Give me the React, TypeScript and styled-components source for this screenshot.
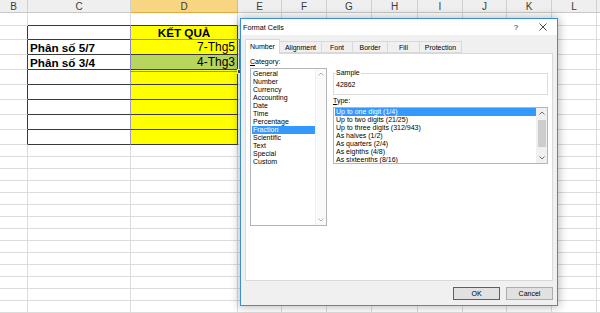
import React from "react";
import styled, { createGlobalStyle } from "styled-components";

const Global = createGlobalStyle`
  html, body { margin: 0; padding: 0; background: #ffffff; }
  body {
    width: 600px;
    height: 313px;
    overflow: hidden;
    font-family: "Liberation Sans", Arial, sans-serif;
  }
`;

const COLS = [28, 103, 107, 44, 45, 45, 46, 45, 44, 45, 45, 45];
const LETTERS = ["B", "C", "D", "E", "F", "G", "H", "I", "J", "K", "L", ""];
const ROWS = [13, 13, 14, 15, 15, 15, 15, 15, 15, 15, ...Array(14).fill(12)];

const GRID = "#dcdcdc";
const DARK = "#3a3a3a";
const INNER = "#9a9ac4";

const Page = styled.div`
  position: relative;
  width: 600px;
  height: 313px;
  overflow: hidden;
  background: #fff;
`;

const Sheet = styled.div`
  display: grid;
  grid-template-columns: ${COLS.map((c) => c + "px").join(" ")};
  grid-template-rows: ${ROWS.map((r) => r + "px").join(" ")};
  width: max-content;
`;

const HeaderCell = styled.div<{ $active?: boolean }>`
  box-sizing: border-box;
  display: flex;
  align-items: center;
  justify-content: center;
  font-size: 10px;
  color: #3c3c3c;
  background: ${(p) => (p.$active ? "#f8d582" : "#efefef")};
  border-right: 1px solid ${(p) => (p.$active ? "#e2bb5e" : "#d0d0d0")};
  border-bottom: 1px solid ${(p) => (p.$active ? "#e6a93a" : "#c8c8c8")};
`;

const Cell = styled.div<{
  $bg: string;
  $br: string;
  $bb: string;
  $align: "left" | "right" | "center";
  $bold?: boolean;
}>`
  box-sizing: border-box;
  display: flex;
  align-items: center;
  justify-content: ${(p) =>
    p.$align === "left" ? "flex-start" : p.$align === "right" ? "flex-end" : "center"};
  padding: 0 2px;
  background: ${(p) => p.$bg};
  border-right: 1px solid ${(p) => p.$br};
  border-bottom: 1px solid ${(p) => p.$bb};
  font-size: ${(p) => (p.$bold ? "11.7px" : "12px")};
  font-weight: ${(p) => (p.$bold ? 700 : 400)};
  color: #000;
  white-space: nowrap;
  overflow: hidden;
`;

const Selection = styled.div`
  position: absolute;
  left: 130px;
  top: 39px;
  width: 108px;
  height: 31px;
  border: 1px solid #8585c2;
  pointer-events: none;
`;

const FillHandle = styled.div`
  position: absolute;
  right: -3px;
  bottom: -3px;
  width: 3px;
  height: 3px;
  background: #4a4a6a;
  border: 1px solid #fff;
`;

/* ---------- dialog ---------- */

const Dialog = styled.div`
  position: absolute;
  left: 240px;
  top: 18px;
  width: 318px;
  height: 288px;
  box-sizing: border-box;
  border: 1px solid #3a8fda;
  background: #f0f0f0;
  box-shadow: 0 0 9px 1px rgba(0, 0, 0, 0.28);
  display: flex;
  flex-direction: column;
  font-family: "Liberation Sans", Arial, sans-serif;
  font-size: 7px;
  color: #000;
`;

const TitleBar = styled.div`
  height: 16px;
  background: #fff;
  display: flex;
  align-items: center;
  padding: 0 9px 0 2px;
  font-size: 7.2px;
`;

const Title = styled.span`
  flex: 1;
`;

const TitleButton = styled.span`
  display: flex;
  align-items: center;
  justify-content: center;
  width: 10px;
  margin-left: 17px;
  font-size: 8px;
  color: #222;
`;

const Body = styled.div`
  flex: 1;
  display: flex;
  flex-direction: column;
  padding: 4px 4px 5px 4px;
`;

const TabRow = styled.div`
  display: flex;
  align-items: flex-end;
  height: 14px;
  position: relative;
  z-index: 1;
`;

const Tab = styled.div<{ $w: number; $active?: boolean }>`
  box-sizing: border-box;
  width: ${(p) => p.$w}px;
  height: ${(p) => (p.$active ? 15 : 12)}px;
  margin-bottom: ${(p) => (p.$active ? -1 : 0)}px;
  display: flex;
  align-items: center;
  justify-content: center;
  padding-bottom: ${(p) => (p.$active ? 2 : 0)}px;
  background: ${(p) => (p.$active ? "#ffffff" : "#f0f0f0")};
  border: 1px solid #d9d9d9;
  border-bottom: ${(p) => (p.$active ? "none" : "1px solid #d9d9d9")};
  border-left: ${(p) => (p.$active ? "1px solid #d9d9d9" : "none")};
  white-space: nowrap;
`;

const Panel = styled.div`
  box-sizing: border-box;
  height: 228px;
  background: #fff;
  border: 1px solid #d9d9d9;
  display: flex;
  gap: 6px;
  padding: 4px 4px 0 4px;
`;

const LeftCol = styled.div`
  width: 77px;
  display: flex;
  flex-direction: column;
`;

const RightCol = styled.div`
  width: 215px;
  display: flex;
  flex-direction: column;
  padding-top: 15px;
`;

const FieldLabel = styled.div<{ $mt?: number }>`
  height: 8px;
  line-height: 8px;
  margin-top: ${(p) => p.$mt ?? 0}px;
  margin-bottom: 2px;
  white-space: nowrap;
`;

const ListBox = styled.div<{ $h: number }>`
  box-sizing: border-box;
  height: ${(p) => p.$h}px;
  border: 1px solid #b3b5ba;
  background: #fff;
  display: flex;
  overflow: hidden;
`;

const Items = styled.div<{ $pt: number }>`
  flex: 1;
  padding-top: ${(p) => p.$pt}px;
  min-width: 0;
`;

const Item = styled.div<{ $sel?: boolean }>`
  height: 8px;
  line-height: 8px;
  padding-left: 1px;
  margin-left: 1px;
  white-space: nowrap;
  background: ${(p) => (p.$sel ? "#3399ff" : "transparent")};
  color: ${(p) => (p.$sel ? "#fff" : "#000")};
`;

const Scroll = styled.div<{ $track: string }>`
  width: 10px;
  display: flex;
  flex-direction: column;
  align-items: stretch;
  background: ${(p) => p.$track};
  border-left: 1px solid #f0f0f0;
`;

const Arrow = styled.div`
  height: 10px;
  display: flex;
  align-items: center;
  justify-content: center;
`;

const Track = styled.div`
  flex: 1;
  display: flex;
  flex-direction: column;
  padding: 1px 1px;
`;

const Thumb = styled.div`
  margin-top: 1px;
  height: 27px;
  background: #cdcdcd;
`;

const GroupBox = styled.div`
  position: relative;
  box-sizing: border-box;
  height: 22px;
  border: 1px solid #dcdcdc;
  padding: 7px 0 0 2px;
  line-height: 8px;
`;

const Legend = styled.span`
  position: absolute;
  left: 2px;
  top: -5px;
  line-height: 8px;
  background: #fff;
  padding-right: 1px;
`;

const Footer = styled.div`
  display: flex;
  justify-content: flex-end;
  gap: 6px;
  margin-top: 6px;
`;

const Button = styled.div<{ $default?: boolean }>`
  box-sizing: border-box;
  width: 47px;
  height: 13px;
  display: flex;
  align-items: center;
  justify-content: center;
  background: #e1e1e1;
  border: 1px solid ${(p) => (p.$default ? "#0078d7" : "#adadad")};
`;

const Chevron = ({ up, color }: { up?: boolean; color: string }) => (
  <svg width="6" height="4" viewBox="0 0 6 4">
    <polyline
      points={up ? "0.5,3.5 3,1 5.5,3.5" : "0.5,0.5 3,3 5.5,0.5"}
      fill="none"
      stroke={color}
      strokeWidth="0.9"
    />
  </svg>
);

const CloseIcon = () => (
  <svg width="8" height="8" viewBox="0 0 8 8">
    <path d="M0.5 0.5 L7.5 7.5 M7.5 0.5 L0.5 7.5" stroke="#333" strokeWidth="0.9" />
  </svg>
);

const CATEGORIES = [
  "General",
  "Number",
  "Currency",
  "Accounting",
  "Date",
  "Time",
  "Percentage",
  "Fraction",
  "Scientific",
  "Text",
  "Special",
  "Custom",
];

const TYPES = [
  "Up to one digit (1/4)",
  "Up to two digits (21/25)",
  "Up to three digits (312/943)",
  "As halves (1/2)",
  "As quarters (2/4)",
  "As eighths (4/8)",
  "As sixteenths (8/16)",
];

const TABS: [string, number][] = [
  ["Number", 35],
  ["Alignment", 42],
  ["Font", 31],
  ["Border", 35],
  ["Fill", 32],
  ["Protection", 42],
];

type CellData = { text: string; align: "left" | "right" | "center"; bold?: boolean; bg: string };

const TABLE: Record<number, [CellData, CellData]> = {
  2: [{ text: "", align: "left", bg: "#fff" }, { text: "KẾT QUẢ", align: "center", bold: true, bg: "#ffff00" }],
  3: [{ text: "Phân số 5/7", align: "left", bold: true, bg: "#fff" }, { text: "7-Thg5", align: "right", bg: "#ffff00" }],
  4: [{ text: "Phân số 3/4", align: "left", bold: true, bg: "#fff" }, { text: "4-Thg3", align: "right", bg: "#b7d65b" }],
};

function renderSheet() {
  const cells: React.ReactNode[] = [];
  LETTERS.forEach((l, c) => {
    cells.push(
      <HeaderCell key={`h${c}`} $active={c === 2}>
        {l}
      </HeaderCell>
    );
  });
  for (let r = 1; r < ROWS.length; r++) {
    const inTable = r >= 2 && r <= 9;
    for (let c = 0; c < COLS.length; c++) {
      let br = GRID;
      let bb = GRID;
      let bg = "#fff";
      let text = "";
      let align: "left" | "right" | "center" = "left";
      let bold = false;
      if (inTable) {
        if (c === 0) br = DARK;
        if (c === 1) br = INNER;
        if (c === 2) br = DARK;
        if (c === 1 || c === 2) bb = DARK;
        if (c === 2) bg = "#ffff00";
        const row = TABLE[r];
        if (row && (c === 1 || c === 2)) {
          const d = row[c - 1];
          text = d.text;
          align = d.align;
          bold = !!d.bold;
          bg = d.bg;
        }
      }
      if (r === 1 && (c === 1 || c === 2)) bb = DARK;
      cells.push(
        <Cell key={`${r}-${c}`} $bg={bg} $br={br} $bb={bb} $align={align} $bold={bold}>
          {text}
        </Cell>
      );
    }
  }
  return cells;
}

export default function App() {
  return (
    <>
      <Global />
      <Page>
        <Sheet>{renderSheet()}</Sheet>
        <Selection>
          <FillHandle />
        </Selection>
        <Dialog>
          <TitleBar>
            <Title>Format Cells</Title>
            <TitleButton>?</TitleButton>
            <TitleButton>
              <CloseIcon />
            </TitleButton>
          </TitleBar>
          <Body>
            <TabRow>
              {TABS.map(([t, w], i) => (
                <Tab key={t} $w={w} $active={i === 0}>
                  {t}
                </Tab>
              ))}
            </TabRow>
            <Panel>
              <LeftCol>
                <FieldLabel>
                  <u>C</u>ategory:
                </FieldLabel>
                <ListBox $h={158}>
                  <Items $pt={1}>
                    {CATEGORIES.map((c) => (
                      <Item key={c} $sel={c === "Fraction"}>
                        {c}
                      </Item>
                    ))}
                  </Items>
                  <Scroll $track="#fafafa">
                    <Arrow>
                      <Chevron up color="#a8a8a8" />
                    </Arrow>
                    <Track />
                    <Arrow>
                      <Chevron color="#a8a8a8" />
                    </Arrow>
                  </Scroll>
                </ListBox>
              </LeftCol>
              <RightCol>
                <GroupBox>
                  <Legend>Sample</Legend>
                  42862
                </GroupBox>
                <FieldLabel $mt={2}>
                  <u>T</u>ype:
                </FieldLabel>
                <ListBox $h={57}>
                  <Items $pt={0}>
                    {TYPES.map((t, i) => (
                      <Item key={t} $sel={i === 0}>
                        {t}
                      </Item>
                    ))}
                  </Items>
                  <Scroll $track="#f0f0f0">
                    <Arrow>
                      <Chevron up color="#606060" />
                    </Arrow>
                    <Track>
                      <Thumb />
                    </Track>
                    <Arrow>
                      <Chevron color="#606060" />
                    </Arrow>
                  </Scroll>
                </ListBox>
              </RightCol>
            </Panel>
            <Footer>
              <Button $default>OK</Button>
              <Button>Cancel</Button>
            </Footer>
          </Body>
        </Dialog>
      </Page>
    </>
  );
}
